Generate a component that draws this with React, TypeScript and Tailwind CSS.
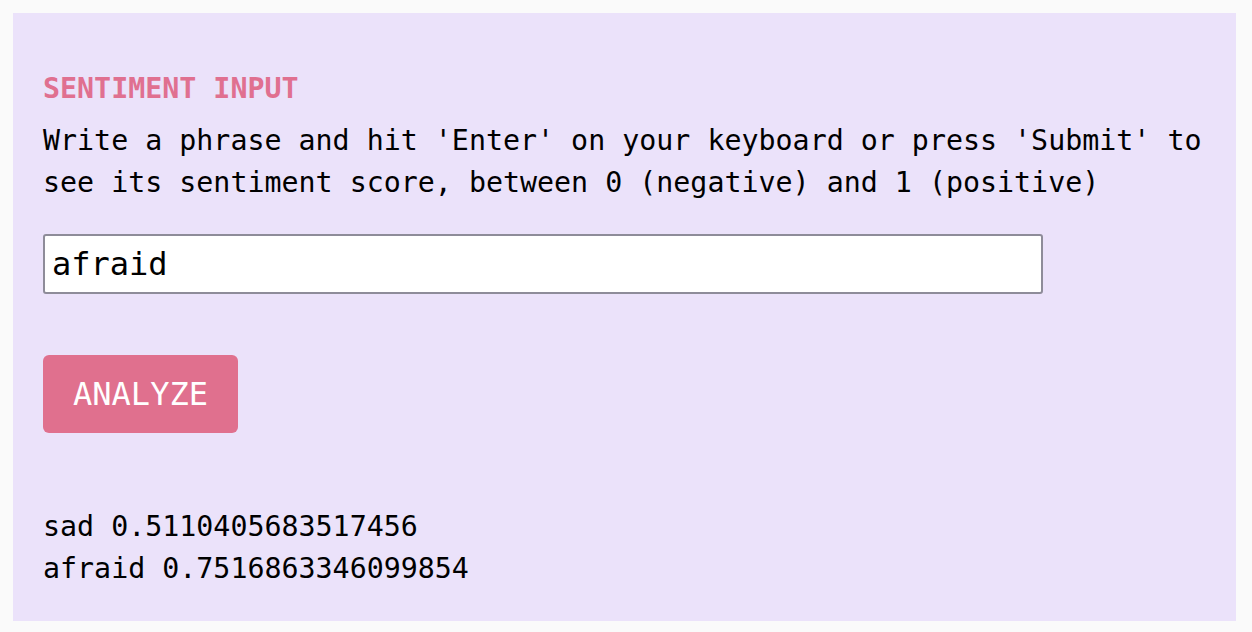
import React from "react";

export default function App() {
  const mono = { fontFamily: '"DejaVu Sans Mono", "Liberation Mono", monospace' };
  return (
    <div className="min-h-screen bg-[#fafafa] pt-[13px] pl-[13px] pr-[16px] pb-[11px]" style={mono}>
      <div className="bg-[#ebe2fa] pt-[55px] px-[30px] pb-[31px] text-black">
        <h2 className="text-[28.3px] leading-[42px] font-bold text-[#e07090]">SENTIMENT INPUT</h2>
        <p className="mt-[10px] text-[28.3px] leading-[42px]">
          Write a phrase and hit 'Enter' on your keyboard or press 'Submit' to
          <br />
          see its sentiment score, between 0 (negative) and 1 (positive)
        </p>
        <input
          className="mt-[30px] block w-[1000px] h-[60px] border-2 border-[#8e8c99] rounded-[3px] bg-white px-[7px] text-[32px] text-black outline-none"
          style={mono}
          defaultValue="afraid"
        />
        <button
          className="mt-[61px] block w-[195px] h-[78px] rounded-[6px] bg-[#e0708e] text-white text-[32px]"
          style={mono}
        >
          ANALYZE
        </button>
        <div className="mt-[73px] text-[28.3px] leading-[42px]">
          <div>sad 0.5110405683517456</div>
          <div>afraid 0.7516863346099854</div>
        </div>
      </div>
    </div>
  );
}
